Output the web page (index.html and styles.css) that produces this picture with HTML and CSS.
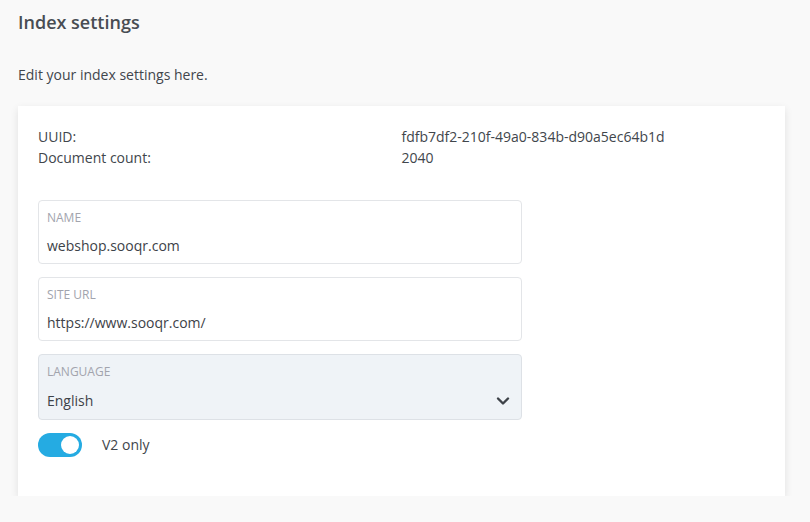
FILE: index.html
```html
<!DOCTYPE html>
<html>
<head>
<meta charset="utf-8">
<link rel="stylesheet" href="styles.css">
</head>
<body>
<div class="page">
  <h1 class="title">Index settings</h1>
  <p class="subtitle">Edit your index settings here.</p>
  <div class="card">
    <div class="info">
      <div>UUID:</div><div>fdfb7df2-210f-49a0-834b-d90a5ec64b1d</div>
      <div>Document count:</div><div>2040</div>
    </div>
    <div class="fields">
      <div class="field">
        <div class="label">Name</div>
        <div class="value">webshop.sooqr.com</div>
      </div>
      <div class="field">
        <div class="label">Site URL</div>
        <div class="value">https://www.sooqr.com/</div>
      </div>
      <div class="field select">
        <div class="label">Language</div>
        <div class="value">English</div>
        <svg class="chevron" width="14" height="10" viewBox="0 0 14 10"><path d="M2 2.5 L7 7.5 L12 2.5" fill="none" stroke="#3d4248" stroke-width="2.4" stroke-linecap="round" stroke-linejoin="round"/></svg>
      </div>
      <div class="toggle-row">
        <span class="toggle"><span class="knob"></span></span>
        <span class="toggle-label">V2 only</span>
      </div>
    </div>
  </div>
</div>
</body>
</html>
```
FILE: styles.css
```css
html, body {
  margin: 0;
  padding: 0;
  background: #f9f9f9;
}
body {
  font-family: "Open Sans", "Liberation Sans", sans-serif;
  color: #41464c;
}
.page {
  padding: 10px 25px 0 18px;
}
.title {
  margin: 0;
  font-size: 18px;
  line-height: 24px;
  font-weight: 600;
  color: #484d53;
}
.subtitle {
  margin: 31px 0 0;
  font-size: 14px;
  line-height: 20px;
  color: #41464c;
}
.card {
  margin-top: 21px;
  background: #fff;
  padding: 19.5px 20px 39px;
  box-shadow: 0 3px 8px rgba(0, 0, 0, 0.1);
}
.info {
  display: grid;
  grid-template-columns: 1fr 1fr;
  font-size: 14px;
  line-height: 21px;
  color: #41464c;
}
.fields {
  margin-top: 32.5px;
  width: 484px;
  display: flex;
  flex-direction: column;
  gap: 13px;
}
.field {
  position: relative;
  border: 1px solid #e3e5e8;
  border-radius: 4px;
  padding: 8px 8px 7px;
  background: #fff;
}
.field.select {
  background: #eff3f7;
  border-color: #dde1e6;
  padding-bottom: 8px;
}
.label {
  font-size: 12px;
  line-height: 17px;
  text-transform: uppercase;
  color: #a2a4ad;
}
.value {
  margin-top: 10px;
  font-size: 14px;
  line-height: 20px;
  color: #3d4248;
}
.select .value {
  margin-top: 11px;
}
.chevron {
  position: absolute;
  right: 11px;
  bottom: 13px;
}
.toggle-row {
  display: flex;
  align-items: center;
  gap: 20px;
}
.toggle {
  width: 44px;
  height: 24px;
  border-radius: 12px;
  background: #25abe2;
  display: flex;
  align-items: center;
  justify-content: flex-end;
  padding: 0 3px;
  box-sizing: border-box;
}
.knob {
  width: 18px;
  height: 18px;
  border-radius: 50%;
  background: #fff;
}
.toggle-label {
  font-size: 14px;
  line-height: 20px;
  color: #41464c;
}
```
